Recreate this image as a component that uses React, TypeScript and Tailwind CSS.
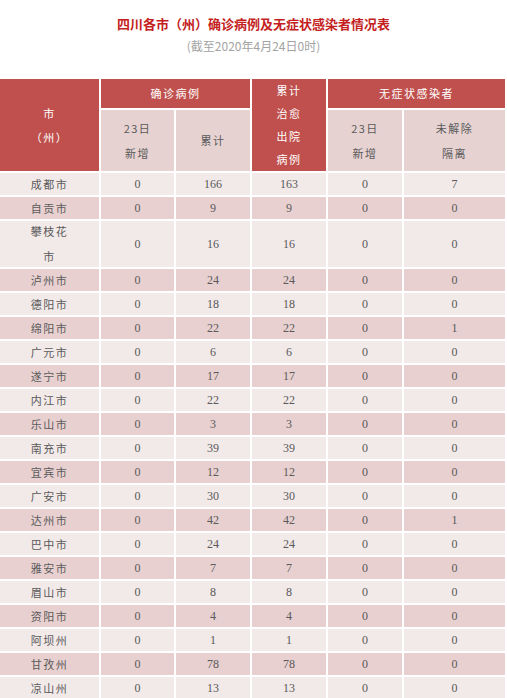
import React from "react";

type Row = { city: string[]; a: number; b: number; c: number; d: number; e: number };

const rows: Row[] = [
  { city: ["成都市"], a: 0, b: 166, c: 163, d: 0, e: 7 },
  { city: ["自贡市"], a: 0, b: 9, c: 9, d: 0, e: 0 },
  { city: ["攀枝花", "市"], a: 0, b: 16, c: 16, d: 0, e: 0 },
  { city: ["泸州市"], a: 0, b: 24, c: 24, d: 0, e: 0 },
  { city: ["德阳市"], a: 0, b: 18, c: 18, d: 0, e: 0 },
  { city: ["绵阳市"], a: 0, b: 22, c: 22, d: 0, e: 1 },
  { city: ["广元市"], a: 0, b: 6, c: 6, d: 0, e: 0 },
  { city: ["遂宁市"], a: 0, b: 17, c: 17, d: 0, e: 0 },
  { city: ["内江市"], a: 0, b: 22, c: 22, d: 0, e: 0 },
  { city: ["乐山市"], a: 0, b: 3, c: 3, d: 0, e: 0 },
  { city: ["南充市"], a: 0, b: 39, c: 39, d: 0, e: 0 },
  { city: ["宜宾市"], a: 0, b: 12, c: 12, d: 0, e: 0 },
  { city: ["广安市"], a: 0, b: 30, c: 30, d: 0, e: 0 },
  { city: ["达州市"], a: 0, b: 42, c: 42, d: 0, e: 1 },
  { city: ["巴中市"], a: 0, b: 24, c: 24, d: 0, e: 0 },
  { city: ["雅安市"], a: 0, b: 7, c: 7, d: 0, e: 0 },
  { city: ["眉山市"], a: 0, b: 8, c: 8, d: 0, e: 0 },
  { city: ["资阳市"], a: 0, b: 4, c: 4, d: 0, e: 0 },
  { city: ["阿坝州"], a: 0, b: 1, c: 1, d: 0, e: 0 },
  { city: ["甘孜州"], a: 0, b: 78, c: 78, d: 0, e: 0 },
  { city: ["凉山州"], a: 0, b: 13, c: 13, d: 0, e: 0 },
];

const red = "bg-[#c0504d] text-white";
const pink = "bg-[#e7d2d2] text-[#5a5a5a]";
const num = { fontFamily: '"Liberation Serif", "Noto Sans CJK SC", serif' };

export default function App() {
  return (
    <div
      className="w-[507px] bg-white"
      style={{ fontFamily: '"Noto Sans CJK SC", "Liberation Sans", sans-serif' }}
    >
      {/* title */}
      <div className="pt-[15px] pb-[24px] text-center">
        <div className="text-[13px] leading-[18px] font-bold text-[#c41e1e]">
          四川各市（州）确诊病例及无症状感染者情况表
        </div>
        <div className="mt-[4px] text-[12px] leading-[18px] text-[#a3a3a3]">
          (截至2020年4月24日0时)
        </div>
      </div>

      {/* table */}
      <div className="w-[505px] grid grid-cols-[99px_73px_74px_74px_74px_101px] grid-rows-[29px_61px] auto-rows-[22px] gap-[2px] bg-white text-[11px] tracking-[1.5px] text-center">
        <div className={`${red} row-span-2 flex flex-col items-center justify-center leading-[24px]`}>
          <span>市</span>
          <span>（州）</span>
        </div>
        <div className={`${red} col-span-2 flex items-center justify-center`}>确诊病例</div>
        <div className={`${red} row-span-2 flex flex-col items-center justify-center leading-[23px]`}>
          <span>累计</span>
          <span>治愈</span>
          <span>出院</span>
          <span>病例</span>
        </div>
        <div className={`${red} col-span-2 flex items-center justify-center`}>无症状感染者</div>

        <div className={`${pink} flex flex-col items-center justify-center leading-[25px]`}>
          <span>23日</span>
          <span>新增</span>
        </div>
        <div className={`${pink} flex items-center justify-center`}>累计</div>
        <div className={`${pink} flex flex-col items-center justify-center leading-[25px]`}>
          <span>23日</span>
          <span>新增</span>
        </div>
        <div className={`${pink} flex flex-col items-center justify-center leading-[25px]`}>
          <span>未解除</span>
          <span>隔离</span>
        </div>

        {rows.map((r, i) => {
          const bg = i % 2 === 0 ? "bg-[#f2e9e9]" : "bg-[#e8d0d0]";
          const span = r.city.length > 1 ? "row-span-2" : "";
          const cell = `${bg} ${span} flex items-center justify-center text-[12px] tracking-normal text-[#5a5a5a]`;
          return (
            <React.Fragment key={r.city.join("")}>
              <div className={`${bg} ${span} flex flex-col items-center justify-center leading-[25px] text-[#5a5a5a]`}>
                {r.city.map((c) => (
                  <span key={c}>{c}</span>
                ))}
              </div>
              <div className={cell} style={num}>{r.a}</div>
              <div className={cell} style={num}>{r.b}</div>
              <div className={cell} style={num}>{r.c}</div>
              <div className={cell} style={num}>{r.d}</div>
              <div className={cell} style={num}>{r.e}</div>
            </React.Fragment>
          );
        })}
      </div>
    </div>
  );
}
